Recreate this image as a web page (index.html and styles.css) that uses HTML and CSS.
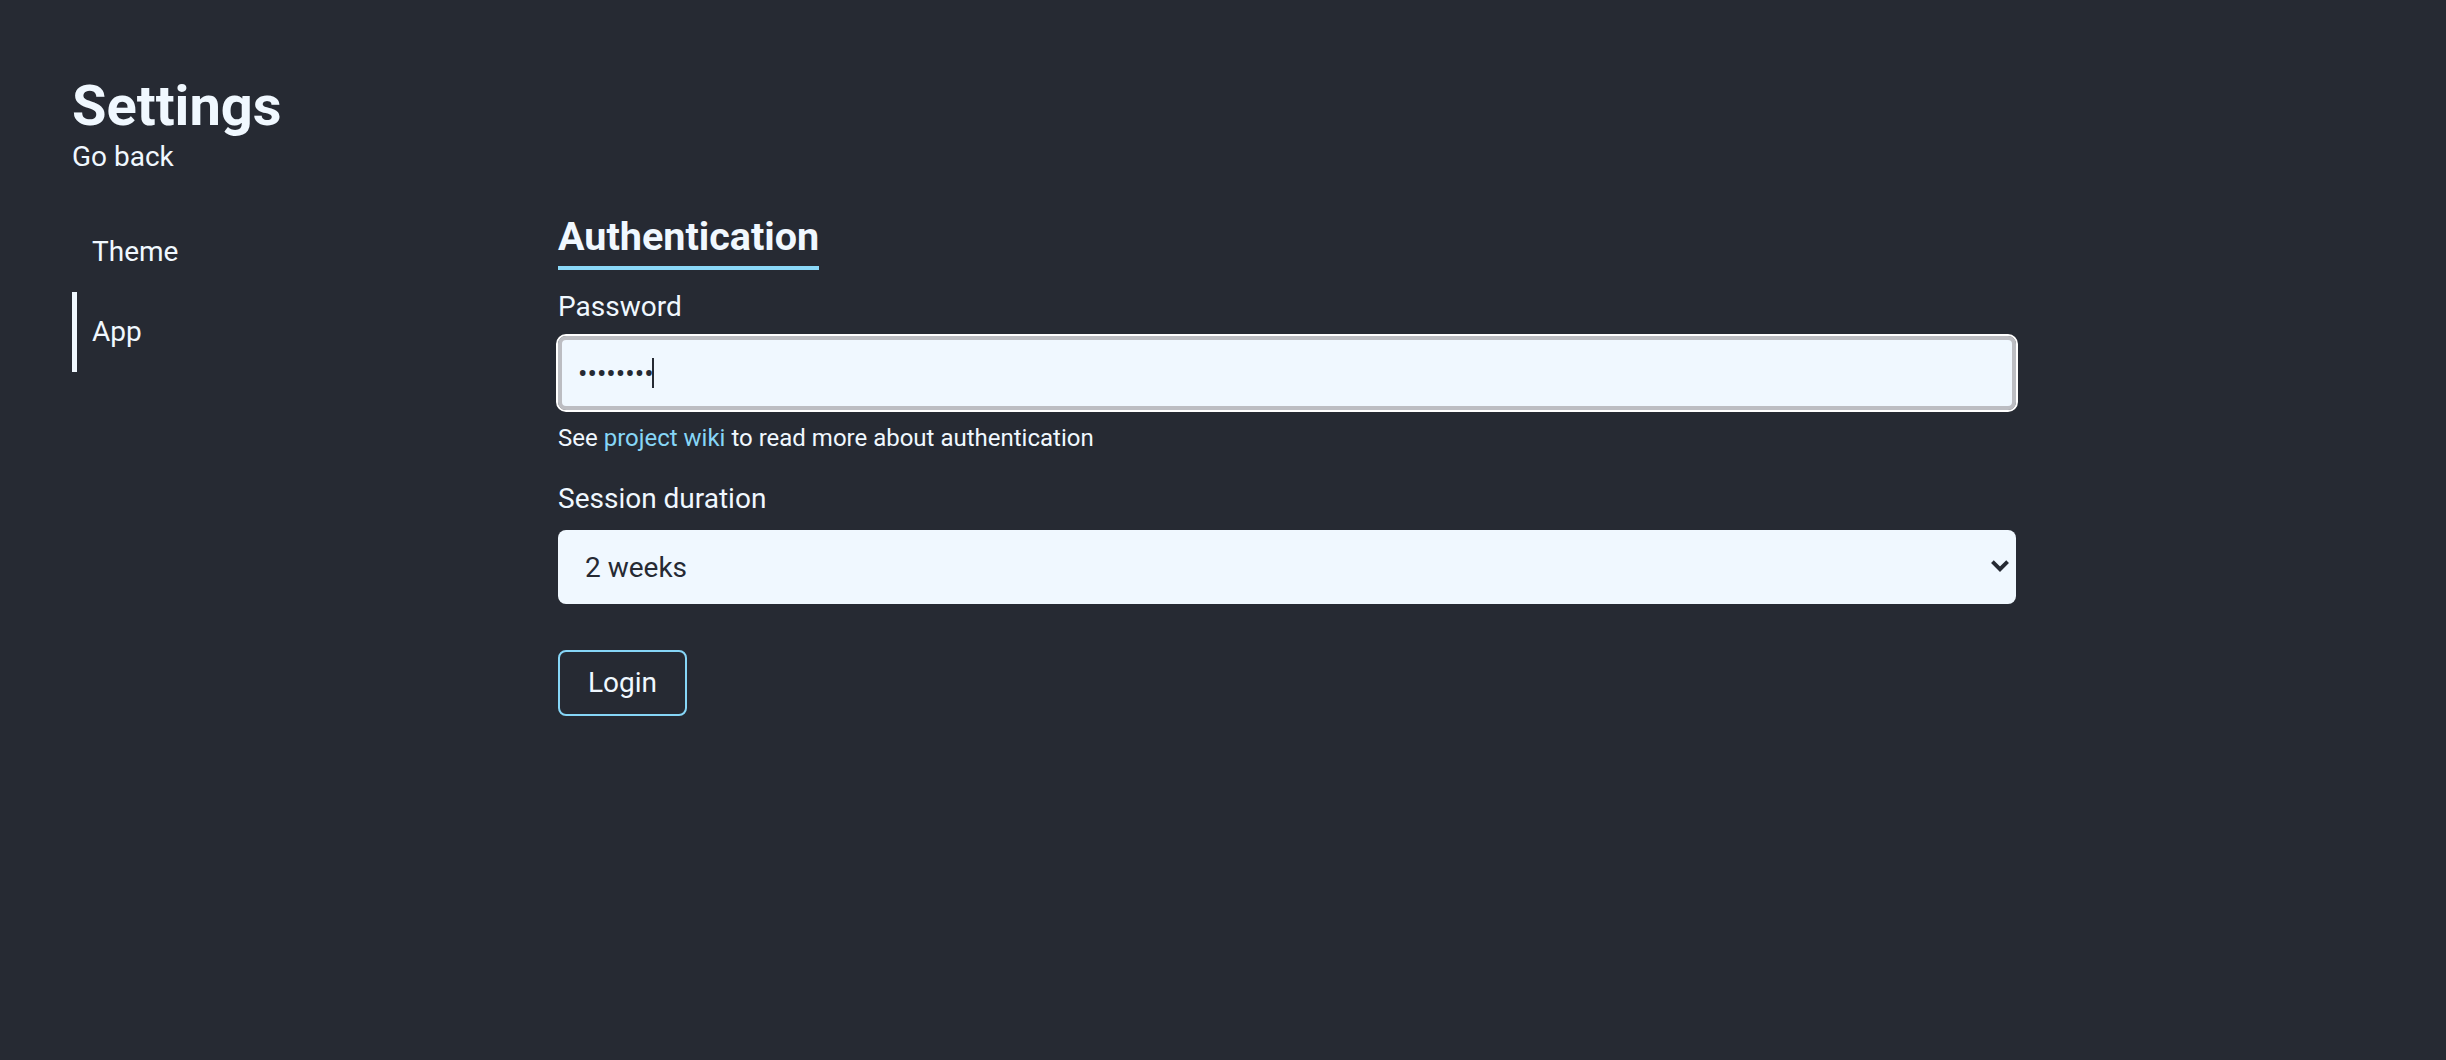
FILE: index.html
```html
<!DOCTYPE html>
<html lang="en">
<head>
<meta charset="utf-8">
<title>Settings</title>
<link rel="stylesheet" href="styles.css">
</head>
<body>
<div class="page">
  <header class="header">
    <h1 class="title">Settings</h1>
    <a class="back" href="#">Go back</a>
  </header>
  <div class="layout">
    <nav class="sidenav">
      <a class="nav-item" href="#">Theme</a>
      <a class="nav-item active" href="#">App</a>
    </nav>
    <main class="content">
      <h2 class="section-title">Authentication</h2>
      <label class="field-label" for="pw">Password</label>
      <div class="input-wrap">
        <input id="pw" class="text-input is-focused" type="password" value="password">
        <span class="caret"></span>
      </div>
      <p class="help">See <a href="#" class="link">project wiki</a> to read more about authentication</p>
      <label class="field-label session-label" for="dur">Session duration</label>
      <div class="select-wrap">
        <select id="dur" class="select">
          <option>1 day</option>
          <option>1 week</option>
          <option selected>2 weeks</option>
          <option>1 month</option>
        </select>
        <svg class="chevron" width="20" height="14" viewBox="0 0 20 14" aria-hidden="true">
          <path d="M2.4 2.6 L10 10.2 L17.6 2.6" fill="none" stroke="#262a33" stroke-width="3.8" stroke-linejoin="miter"/>
        </svg>
      </div>
      <button class="btn" type="button">Login</button>
    </main>
  </div>
</div>
</body>
</html>
```

FILE: styles.css
```css
html, body {
  margin: 0;
  padding: 0;
  background: #262a33;
}

body {
  font-family: Roboto, "Liberation Sans", Arial, sans-serif;
  color: #f0f8ff;
  min-height: 1060px;
}

.page {
  padding: 73px 0 0 72px;
}

.header {
  display: flex;
  flex-direction: column;
  align-items: flex-start;
}

.title {
  margin: 0;
  font-size: 56px;
  font-weight: 700;
  line-height: 66px;
  color: #f0f8ff;
}

.back {
  font-size: 28px;
  line-height: 36px;
  color: #f0f8ff;
  text-decoration: none;
}

.layout {
  display: grid;
  grid-template-columns: 486px 1458px;
  margin-top: 37px;
}

.sidenav {
  display: flex;
  flex-direction: column;
}

.nav-item {
  display: block;
  height: 80px;
  line-height: 80px;
  font-size: 28px;
  color: #f0f8ff;
  text-decoration: none;
  border-left: 5px solid transparent;
  padding-left: 15px;
}

.nav-item.active {
  border-left-color: #f0f8ff;
}

.content {
  display: flex;
  flex-direction: column;
  align-items: stretch;
}

.section-title {
  align-self: flex-start;
  margin: 0;
  font-size: 39.5px;
  font-weight: 700;
  line-height: 50px;
  padding-bottom: 4px;
  border-bottom: 4px solid #8ad8f8;
  color: #f0f8ff;
}

.field-label {
  display: block;
  margin-top: 20px;
  font-size: 28px;
  line-height: 34px;
  color: #f0f8ff;
}

.session-label {
  margin-top: 30px;
}

.input-wrap {
  position: relative;
  margin-top: 12px;
}

.text-input {
  display: block;
  box-sizing: border-box;
  width: 100%;
  height: 74px;
  margin: 0;
  padding: 0 16px;
  border: 4px solid #bcbdc2;
  border-radius: 8px;
  background: #f0f8ff;
  color: #262a33;
  font-family: Roboto, "Liberation Sans", Arial, sans-serif;
  font-size: 28px;
  caret-color: #262a33;
}

.text-input.is-focused {
  outline: 2px solid #ffffff;
  outline-offset: 0;
}

.caret {
  position: absolute;
  left: 94px;
  top: 22px;
  width: 2px;
  height: 30px;
  background: #262a33;
}

.help {
  margin: 14px 0 0;
  font-size: 24px;
  line-height: 28px;
  color: #f0f8ff;
}

.link {
  color: #86d6f7;
  text-decoration: none;
}

.select-wrap {
  position: relative;
  margin-top: 14px;
}

.select {
  display: block;
  box-sizing: border-box;
  width: 100%;
  height: 74px;
  margin: 0;
  padding: 0 27px;
  border: none;
  border-radius: 8px;
  background: #f0f8ff;
  color: #262a33;
  font-family: Roboto, "Liberation Sans", Arial, sans-serif;
  font-size: 28px;
  -webkit-appearance: none;
  appearance: none;
}

.chevron {
  position: absolute;
  right: 6px;
  top: 29px;
  pointer-events: none;
}

.btn {
  align-self: flex-start;
  margin-top: 46px;
  box-sizing: border-box;
  height: 66px;
  padding: 0 28px;
  border: 2px solid #86d6f7;
  border-radius: 8px;
  background: transparent;
  color: #f0f8ff;
  font-family: Roboto, "Liberation Sans", Arial, sans-serif;
  font-size: 28px;
  line-height: 34px;
  cursor: pointer;
}
```
